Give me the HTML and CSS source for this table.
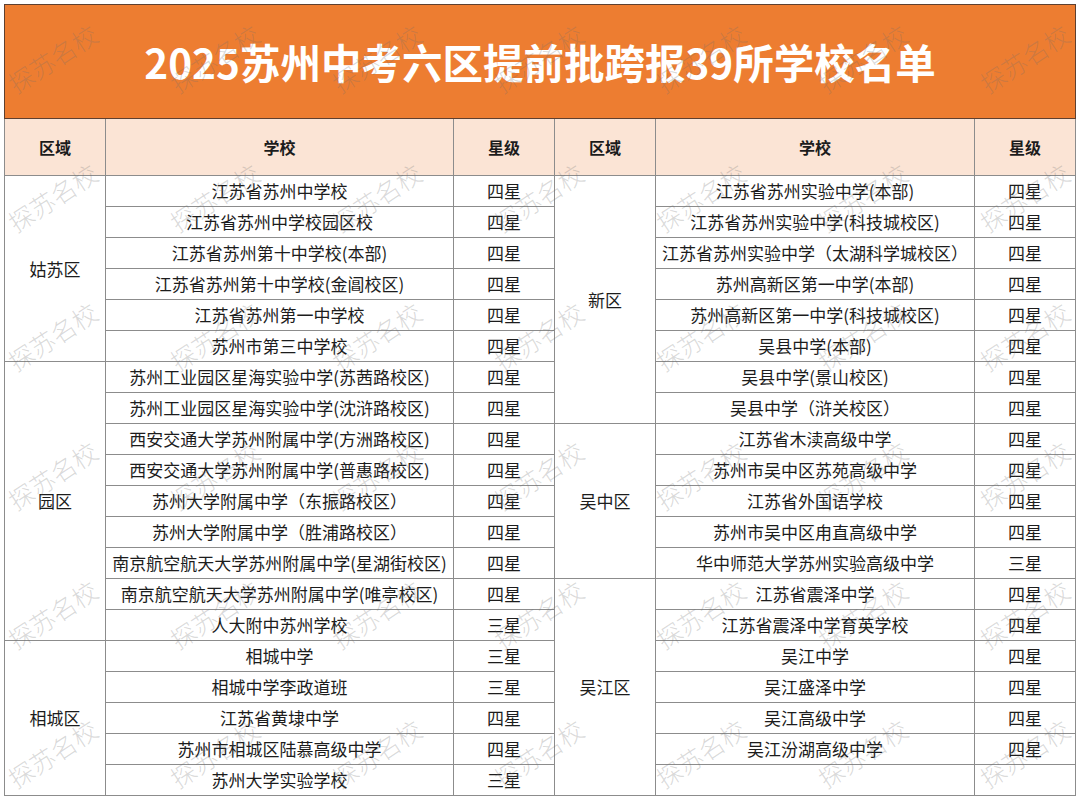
FILE: index.html
```html
<!DOCTYPE html>
<html lang="zh-CN">
<head>
<meta charset="utf-8">
<title>2025苏州中考六区提前批跨报39所学校名单</title>
<link rel="stylesheet" href="styles.css">
</head>
<body>
<div class="page">
  <table class="sheet">
    <colgroup>
      <col class="c-area"><col class="c-school-l"><col class="c-star">
      <col class="c-area2"><col class="c-school-r"><col class="c-star">
    </colgroup>
    <tbody>
      <tr class="title"><td colspan="6">2025苏州中考六区提前批跨报39所学校名单</td></tr>
      <tr class="head"><th>区域</th><th>学校</th><th>星级</th><th>区域</th><th>学校</th><th>星级</th></tr>
      <tr class="r"><td rowspan="6">姑苏区</td><td>江苏省苏州中学校</td><td>四星</td><td rowspan="8">新区</td><td>江苏省苏州实验中学(本部)</td><td>四星</td></tr>
      <tr class="r"><td>江苏省苏州中学校园区校</td><td>四星</td><td>江苏省苏州实验中学(科技城校区)</td><td>四星</td></tr>
      <tr class="r"><td>江苏省苏州第十中学校(本部)</td><td>四星</td><td>江苏省苏州实验中学（太湖科学城校区）</td><td>四星</td></tr>
      <tr class="r"><td>江苏省苏州第十中学校(金阊校区)</td><td>四星</td><td>苏州高新区第一中学(本部)</td><td>四星</td></tr>
      <tr class="r"><td>江苏省苏州第一中学校</td><td>四星</td><td>苏州高新区第一中学(科技城校区)</td><td>四星</td></tr>
      <tr class="r"><td>苏州市第三中学校</td><td>四星</td><td>吴县中学(本部)</td><td>四星</td></tr>
      <tr class="r"><td rowspan="9">园区</td><td>苏州工业园区星海实验中学(苏茜路校区)</td><td>四星</td><td>吴县中学(景山校区)</td><td>四星</td></tr>
      <tr class="r"><td>苏州工业园区星海实验中学(沈浒路校区)</td><td>四星</td><td>吴县中学（浒关校区）</td><td>四星</td></tr>
      <tr class="r"><td>西安交通大学苏州附属中学(方洲路校区)</td><td>四星</td><td rowspan="5">吴中区</td><td>江苏省木渎高级中学</td><td>四星</td></tr>
      <tr class="r"><td>西安交通大学苏州附属中学(普惠路校区)</td><td>四星</td><td>苏州市吴中区苏苑高级中学</td><td>四星</td></tr>
      <tr class="r"><td>苏州大学附属中学（东振路校区）</td><td>四星</td><td>江苏省外国语学校</td><td>四星</td></tr>
      <tr class="r"><td>苏州大学附属中学（胜浦路校区）</td><td>四星</td><td>苏州市吴中区甪直高级中学</td><td>四星</td></tr>
      <tr class="r"><td>南京航空航天大学苏州附属中学(星湖街校区)</td><td>四星</td><td>华中师范大学苏州实验高级中学</td><td>三星</td></tr>
      <tr class="r"><td>南京航空航天大学苏州附属中学(唯亭校区)</td><td>四星</td><td rowspan="7">吴江区</td><td>江苏省震泽中学</td><td>四星</td></tr>
      <tr class="r"><td>人大附中苏州学校</td><td>三星</td><td>江苏省震泽中学育英学校</td><td>四星</td></tr>
      <tr class="r"><td rowspan="5">相城区</td><td>相城中学</td><td>三星</td><td>吴江中学</td><td>四星</td></tr>
      <tr class="r"><td>相城中学李政道班</td><td>三星</td><td>吴江盛泽中学</td><td>四星</td></tr>
      <tr class="r"><td>江苏省黄埭中学</td><td>四星</td><td>吴江高级中学</td><td>四星</td></tr>
      <tr class="r"><td>苏州市相城区陆慕高级中学</td><td>四星</td><td>吴江汾湖高级中学</td><td>四星</td></tr>
      <tr class="r"><td>苏州大学实验学校</td><td>三星</td><td></td><td></td></tr>
    </tbody>
  </table>
  <div class="watermarks" aria-hidden="true">
    <span class="wm">探苏名校</span><span class="wm">探苏名校</span><span class="wm">探苏名校</span><span class="wm">探苏名校</span><span class="wm">探苏名校</span><span class="wm">探苏名校</span><span class="wm">探苏名校</span>
    <span class="wm">探苏名校</span><span class="wm">探苏名校</span><span class="wm">探苏名校</span><span class="wm">探苏名校</span><span class="wm">探苏名校</span><span class="wm">探苏名校</span><span class="wm">探苏名校</span>
    <span class="wm">探苏名校</span><span class="wm">探苏名校</span><span class="wm">探苏名校</span><span class="wm">探苏名校</span><span class="wm">探苏名校</span><span class="wm">探苏名校</span><span class="wm">探苏名校</span>
    <span class="wm">探苏名校</span><span class="wm">探苏名校</span><span class="wm">探苏名校</span><span class="wm">探苏名校</span><span class="wm">探苏名校</span><span class="wm">探苏名校</span><span class="wm">探苏名校</span>
    <span class="wm">探苏名校</span><span class="wm">探苏名校</span><span class="wm">探苏名校</span><span class="wm">探苏名校</span><span class="wm">探苏名校</span><span class="wm">探苏名校</span><span class="wm">探苏名校</span>
    <span class="wm">探苏名校</span><span class="wm">探苏名校</span><span class="wm">探苏名校</span><span class="wm">探苏名校</span><span class="wm">探苏名校</span><span class="wm">探苏名校</span><span class="wm">探苏名校</span>
  </div>
</div>
</body>
</html>
```

FILE: styles.css
```css
html, body {
  margin: 0;
  padding: 0;
  background: #ffffff;
}

.page {
  position: relative;
  width: 1080px;
  height: 801px;
  padding: 4px;
  box-sizing: border-box;
  overflow: hidden;
  background: #ffffff;
}

.sheet {
  border-collapse: collapse;
  table-layout: fixed;
  width: 1072px;
  font-family: "Noto Sans CJK SC", "Noto Sans", sans-serif;
  color: #1c1c1c;
}

.c-area { width: 101px; }
.c-school-l { width: 348px; }
.c-star { width: 101px; }
.c-area2 { width: 101px; }
.c-school-r { width: 319px; }

.sheet td,
.sheet th {
  border: 1px solid #8c8c8c;
  padding: 0;
  text-align: center;
  vertical-align: middle;
  white-space: nowrap;
  font-size: 17px;
  line-height: 20px;
  font-weight: 400;
}

.title td {
  background: #ed7d31;
  color: #ffffff;
  font-size: 40.5px;
  line-height: 48px;
  font-weight: 700;
  height: 113px;
  border-color: #5e4030;
}

.head th {
  background: #fbe4d5;
  font-size: 16px;
  font-weight: 700;
  height: 56px;
}

.r td {
  height: 30px;
}

.watermarks {
  position: absolute;
  left: -29px;
  top: -12px;
  display: grid;
  grid-template-columns: repeat(7, 162px);
  grid-auto-rows: 139px;
  pointer-events: none;
}

.wm {
  display: flex;
  align-items: center;
  justify-content: center;
  transform: rotate(-33deg);
  font-family: "Noto Sans CJK SC", sans-serif;
  font-size: 25px;
  font-weight: 300;
  color: rgba(110, 110, 110, 0.26);
  white-space: nowrap;
}
```
